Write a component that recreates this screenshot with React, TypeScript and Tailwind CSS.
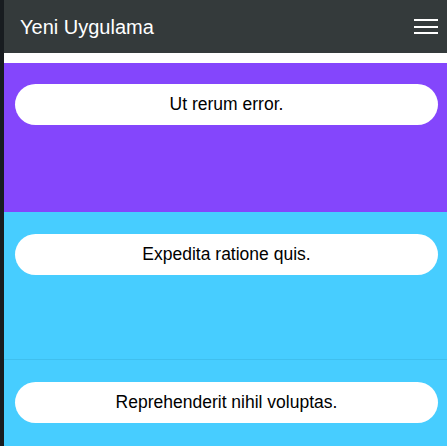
import React from "react";

const sections = [
  { text: "Ut rerum error.", className: "h-[149px] bg-[#8446fc] pt-[21px]" },
  { text: "Expedita ratione quis.", className: "h-[147px] bg-[#47cdff] pt-[22px]" },
  {
    text: "Reprehenderit nihil voluptas.",
    className: "h-[150px] border-t border-[#3fbfee] bg-[#47cdff] pt-[22px]",
  },
];

export default function App() {
  return (
    <div
      className="flex h-[446px] w-[447px] overflow-hidden bg-white"
      style={{ fontFamily: '"Liberation Sans", Arial, sans-serif' }}
    >
      <div className="w-[4px] shrink-0 bg-[#181c20]" />
      <div className="flex min-w-0 flex-1 flex-col">
        <header className="flex h-[53px] shrink-0 items-center justify-between bg-[#343a3b] pl-[16px] pr-[9px]">
          <span className="text-[20px] text-white">Yeni Uygulama</span>
          <button className="flex w-[24px] flex-col gap-[4.5px]" aria-label="menu">
            <span className="block h-[2px] w-full bg-white" />
            <span className="block h-[2px] w-full bg-white" />
            <span className="block h-[2px] w-full bg-white" />
          </button>
        </header>
        <div className="h-[10px] shrink-0 bg-white" />
        {sections.map((s) => (
          <section key={s.text} className={`shrink-0 pl-[11px] pr-[9px] ${s.className}`}>
            <div className="flex h-[41px] items-center justify-center rounded-full bg-white text-[17.5px] text-black">
              {s.text}
            </div>
          </section>
        ))}
      </div>
    </div>
  );
}
